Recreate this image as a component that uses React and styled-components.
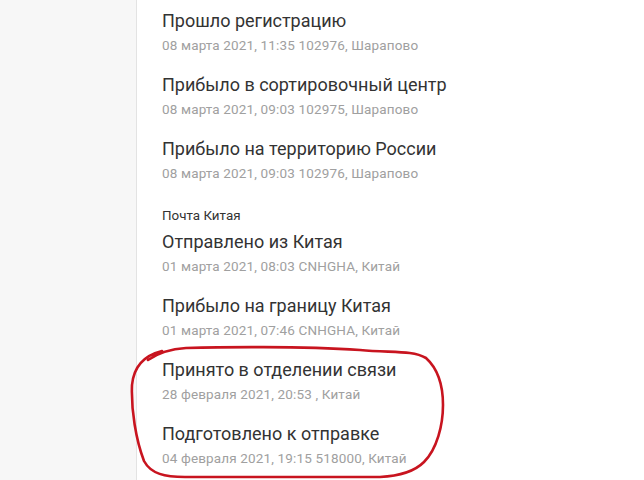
import React from "react";
import styled, { createGlobalStyle } from "styled-components";

const Global = createGlobalStyle`
  html, body { margin: 0; padding: 0; background: #fff; }
  body { font-family: Roboto, "Noto Sans", sans-serif; overflow: hidden; }
`;

const Page = styled.div`
  position: relative;
  display: flex;
  width: 644px;
  height: 480px;
  overflow: hidden;
`;

const Sidebar = styled.div`
  width: 136px;
  flex: none;
  background: #f7f7f7;
  border-right: 1px solid #e3e3e3;
`;

const Content = styled.div`
  flex: 1;
  padding: 9px 0 0 25px;
  display: flex;
  flex-direction: column;
`;

const Entry = styled.div`
  display: flex;
  flex-direction: column;
  margin-bottom: 16px;
`;

const Title = styled.div`
  font-size: 18px;
  line-height: 24px;
  color: #333;
`;

const Meta = styled.div`
  font-size: 13.5px;
  letter-spacing: 0.15px;
  line-height: 24px;
  color: #a0a0a0;
`;

const Group = styled.div`
  font-size: 13.4px;
  line-height: 20px;
  color: #333;
  padding-top: 5px;
  margin-bottom: 4px;
`;

const Marker = styled.svg`
  position: absolute;
  left: 0;
  top: 0;
  pointer-events: none;
`;

const events = [
  { t: "Прошло регистрацию", m: "08 марта 2021, 11:35 102976, Шарапово" },
  { t: "Прибыло в сортировочный центр", m: "08 марта 2021, 09:03 102975, Шарапово" },
  { t: "Прибыло на территорию России", m: "08 марта 2021, 09:03 102976, Шарапово" },
  { group: "Почта Китая" },
  { t: "Отправлено из Китая", m: "01 марта 2021, 08:03 CNHGHA, Китай" },
  { t: "Прибыло на границу Китая", m: "01 марта 2021, 07:46 CNHGHA, Китай" },
  { t: "Принято в отделении связи", m: "28 февраля 2021, 20:53 , Китай" },
  { t: "Подготовлено к отправке", m: "04 февраля 2021, 19:15 518000, Китай" },
];

export default function App() {
  return (
    <>
      <Global />
      <Page>
        <Sidebar />
        <Content>
          {events.map((e, i) =>
            e.group ? (
              <Group key={i}>{e.group}</Group>
            ) : (
              <Entry key={i}>
                <Title>{e.t}</Title>
                <Meta>{e.m}</Meta>
              </Entry>
            )
          )}
        </Content>
        <Marker width="644" height="480" viewBox="0 0 644 480">
          <path
            d="M 162 351 C 146 355, 134 364, 132 385 C 131 410, 136 440, 144 461 C 151 474, 165 477, 185 477 L 380 477 C 400 476, 414 472, 424 462 C 437 449, 443 425, 443 405 C 443 385, 437 368, 426 358 C 412 350, 392 353, 360 350 C 300 346, 220 347, 186 348 C 170 349, 158 353, 148 360"
            fill="none"
            stroke="#c8141f"
            strokeWidth="2.6"
            strokeLinecap="round"
            strokeLinejoin="round"
          />
        </Marker>
      </Page>
    </>
  );
}
